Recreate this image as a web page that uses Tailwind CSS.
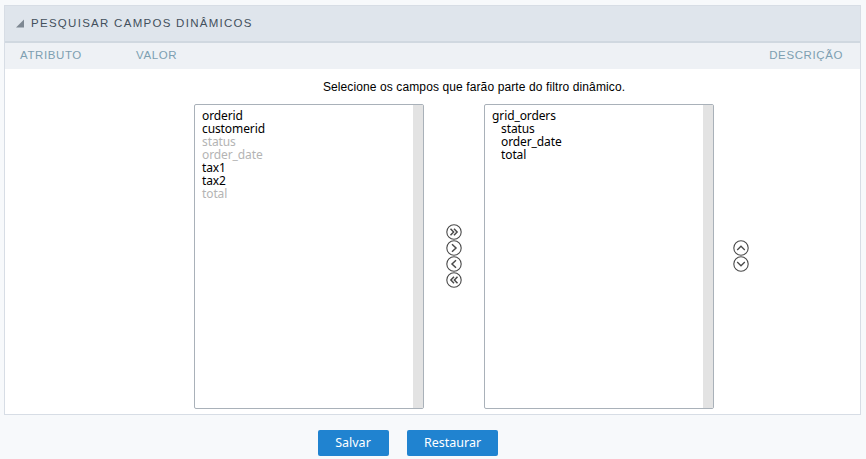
<!DOCTYPE html>
<html lang="en">
<head>
    <meta charset="UTF-8">
    <title>Pesquisar campos dinâmicos</title>
    <script src="https://cdn.jsdelivr.net/npm/@tailwindcss/browser@4"></script>
</head>
<body class="bg-[#f7f9fb] h-[459px] w-[866px] overflow-hidden font-['Liberation_Sans',sans-serif]">
    <div class="pt-[5px] px-[4px]">
        <div class="w-[857px] h-[410px] border border-[#d7dde5] bg-white flex flex-col">
            <!-- Heading -->
            <div class="h-[37px] shrink-0 bg-[#dfe5ec] border-b-[2px] border-[#d0d8e0] flex items-center pl-[11px]">
                <svg width="9" height="9" viewBox="0 0 9 9" class="mr-[6px]"><path d="M0 8.5 L8 8.5 L8 0.5 Z" fill="#7d8792"/></svg>
                <span class="text-[11.5px] tracking-[1.28px] text-[#43505c]">PESQUISAR CAMPOS DINÂMICOS</span>
            </div>
            <!-- Columns -->
            <div class="h-[26px] shrink-0 bg-[#eef1f5] flex items-center text-[11.5px] tracking-[0.6px] text-[#7d9fb1] pl-[15px] pr-[17px]">
                <span class="w-[116px]">ATRIBUTO</span>
                <span>VALOR</span>
                <span class="ml-auto">DESCRIÇÃO</span>
            </div>
            <!-- Body -->
            <div class="flex-1 flex flex-col">
                <p class="text-center text-[12px] tracking-[0.11px] text-black pt-[11px] pl-[83px] h-[35px] leading-[14px]">Selecione os campos que farão parte do filtro dinâmico.</p>
                <div class="flex pl-[189px]">
                    <div class="w-[230px] h-[305px] border border-[#a9b1b9] rounded-[2px] flex font-['Noto_Sans',sans-serif] text-[12px] tracking-[-0.1px] leading-[13px] text-black">
                        <div class="flex-1 pl-[7px] pt-[4px]">
                            <div>orderid</div>
                            <div>customerid</div>
                            <div class="text-[#b4b4b4]">status</div>
                            <div class="text-[#b4b4b4]">order_date</div>
                            <div>tax1</div>
                            <div>tax2</div>
                            <div class="text-[#b4b4b4]">total</div>
                        </div>
                        <div class="w-[10px] bg-[#e3e3e3]"></div>
                    </div>
                    <div class="w-[60px] flex flex-col items-center justify-center pb-[2px]">
                        <svg width="16" height="16" viewBox="0 0 16 16" fill="none" stroke="#4a4a4a" stroke-width="1.1"><circle cx="8" cy="8" r="7.2"/><path d="M4.5 4.8 L7.6 8 L4.5 11.2 M8 4.8 L11.1 8 L8 11.2" stroke-width="1.5"/></svg>
                        <svg width="16" height="16" viewBox="0 0 16 16" fill="none" stroke="#4a4a4a" stroke-width="1.1"><circle cx="8" cy="8" r="7.2"/><path d="M6 4.2 L10 8 L6 11.8" stroke-width="1.5"/></svg>
                        <svg width="16" height="16" viewBox="0 0 16 16" fill="none" stroke="#4a4a4a" stroke-width="1.1"><circle cx="8" cy="8" r="7.2"/><path d="M10 4.2 L6 8 L10 11.8" stroke-width="1.5"/></svg>
                        <svg width="16" height="16" viewBox="0 0 16 16" fill="none" stroke="#4a4a4a" stroke-width="1.1"><circle cx="8" cy="8" r="7.2"/><path d="M8 4.8 L4.9 8 L8 11.2 M11.5 4.8 L8.4 8 L11.5 11.2" stroke-width="1.5"/></svg>
                    </div>
                    <div class="w-[230px] h-[305px] border border-[#a9b1b9] rounded-[2px] flex font-['Noto_Sans',sans-serif] text-[12px] tracking-[-0.1px] leading-[13px] text-black">
                        <div class="flex-1 pl-[7px] pt-[4px]">
                            <div>grid_orders</div>
                            <div class="pl-[9px]">status</div>
                            <div class="pl-[9px]">order_date</div>
                            <div class="pl-[9px]">total</div>
                        </div>
                        <div class="w-[10px] bg-[#e3e3e3]"></div>
                    </div>
                    <div class="w-[54px] flex flex-col items-center justify-center pb-[2px]">
                        <svg width="16" height="16" viewBox="0 0 16 16" fill="none" stroke="#4a4a4a" stroke-width="1.1"><circle cx="8" cy="8" r="7.2"/><path d="M4.2 10 L8 6.2 L11.8 10" stroke-width="1.3"/></svg>
                        <svg width="16" height="16" viewBox="0 0 16 16" fill="none" stroke="#4a4a4a" stroke-width="1.1"><circle cx="8" cy="8" r="7.2"/><path d="M4.2 6 L8 9.8 L11.8 6" stroke-width="1.3"/></svg>
                    </div>
                </div>
            </div>
        </div>
    </div>
    <!-- Buttons -->
    <div class="flex pl-[318px] pt-[15px] gap-[18px] font-['Noto_Sans',sans-serif] text-[12.5px] text-white">
        <button class="w-[71px] h-[26px] rounded-[2px] bg-[#2083d0] pt-[1px] pr-[1px]">Salvar</button>
        <button class="w-[91px] h-[26px] rounded-[2px] bg-[#2083d0] pt-[1px]">Restaurar</button>
    </div>
</body>
</html>
